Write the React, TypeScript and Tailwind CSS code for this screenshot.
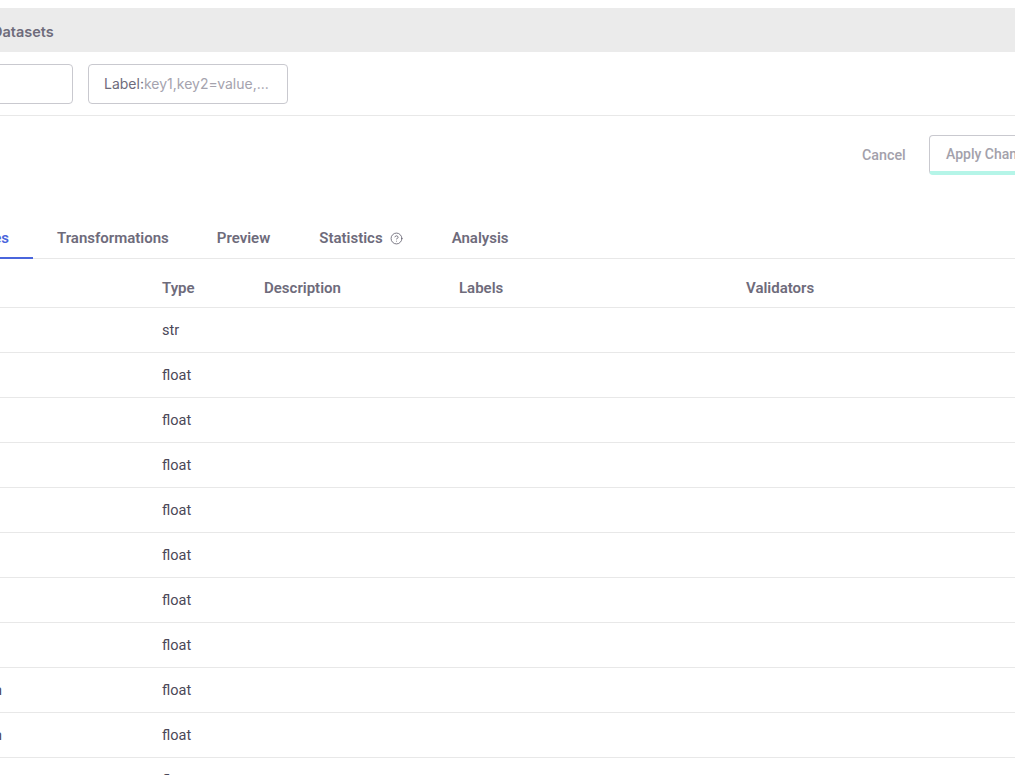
import { CircleHelp } from "lucide-react";

const tabs = ["Transformations", "Preview"];

const rows = [
  { name: "", type: "str" },
  { name: "", type: "float" },
  { name: "", type: "float" },
  { name: "", type: "float" },
  { name: "", type: "float" },
  { name: "", type: "float" },
  { name: "", type: "float" },
  { name: "", type: "float" },
  { name: "n", type: "float" },
  { name: "n", type: "float" },
  { name: "", type: "float" },
];

export default function App() {
  return (
    <div className="w-[1015px] h-[775px] overflow-hidden bg-white font-['Roboto',sans-serif]">
      <div className="w-[1300px] -ml-[100px] pt-2">
        <div className="h-[44px] bg-[#ebebeb] flex items-center pl-[92px] pt-[4px] font-['Inter',sans-serif] text-[14.5px] font-semibold text-[#6e6b7b]">
          Datasets
        </div>

        <div className="h-[64px] border-b border-[#e8e8e8] flex items-center gap-[15px] pl-[20px]">
          <div className="w-[153px] h-10 rounded border border-[#c9c9cf] bg-white" />
          <div className="w-[200px] h-10 rounded border border-[#c9c9cf] bg-white flex items-center px-[15px] text-sm font-['Inter',sans-serif]">
            <span className="text-[#6e6b7b]">Label:</span>
            <span className="text-[#a5a3ae]">key1,key2=value,...</span>
          </div>
        </div>

        <div className="h-[60px] pt-[19px] flex items-start pl-[962px]">
          <button className="h-10 w-[43px] pt-[2px] whitespace-nowrap text-[14.3px] font-medium text-[#a3a1ab]">Cancel</button>
          <button className="ml-6 w-[180px] h-10 rounded border border-[#c9c9cf] border-b-4 border-b-[#b5f5e8] bg-white text-left pl-4 text-sm font-medium text-[#a3a1ab]">
            Apply Changes
          </button>
        </div>

        <div className="mt-[43px] h-10 border-b border-[#e8e8e8] flex items-stretch text-[15px] font-semibold text-[#6e6b7b] pl-[33px]">
          <div className="relative -ml-[33px] w-[133px] flex items-center justify-end pr-6 border-b-2 border-[#4a65dc] h-10 text-[#4a65dc]">
            Features
          </div>
          {tabs.map((tab) => (
            <div key={tab} className="px-6 flex items-center">
              {tab}
            </div>
          ))}
          <div className="ml-[1px] px-6 flex items-center gap-[7px]">
            Statistics
            <CircleHelp className="w-[13px] h-[13px] mr-[1px] -mt-[1px] text-[#5f5c6b]" strokeWidth={1.5} />
          </div>
          <div className="px-6 flex items-center">Analysis</div>
        </div>

        <div className="grid grid-cols-[262px_102px_195px_287px_1fr] h-[49px] pt-[10px] items-center border-b border-[#e8e8e8] text-[15px] font-semibold text-[#6e6b7b]">
          <div />
          <div>Type</div>
          <div>Description</div>
          <div>Labels</div>
          <div>Validators</div>
        </div>

        {rows.map((row, i) => (
          <div
            key={i}
            className="grid grid-cols-[262px_102px_195px_287px_1fr] h-[45px] pt-[2px] items-center border-b border-[#e8e8e8] text-[14.5px] text-[#4b4858]"
          >
            <div className="text-right pr-[160px]">{row.name}</div>
            <div>{row.type}</div>
            <div />
            <div />
            <div />
          </div>
        ))}
      </div>
    </div>
  );
}
